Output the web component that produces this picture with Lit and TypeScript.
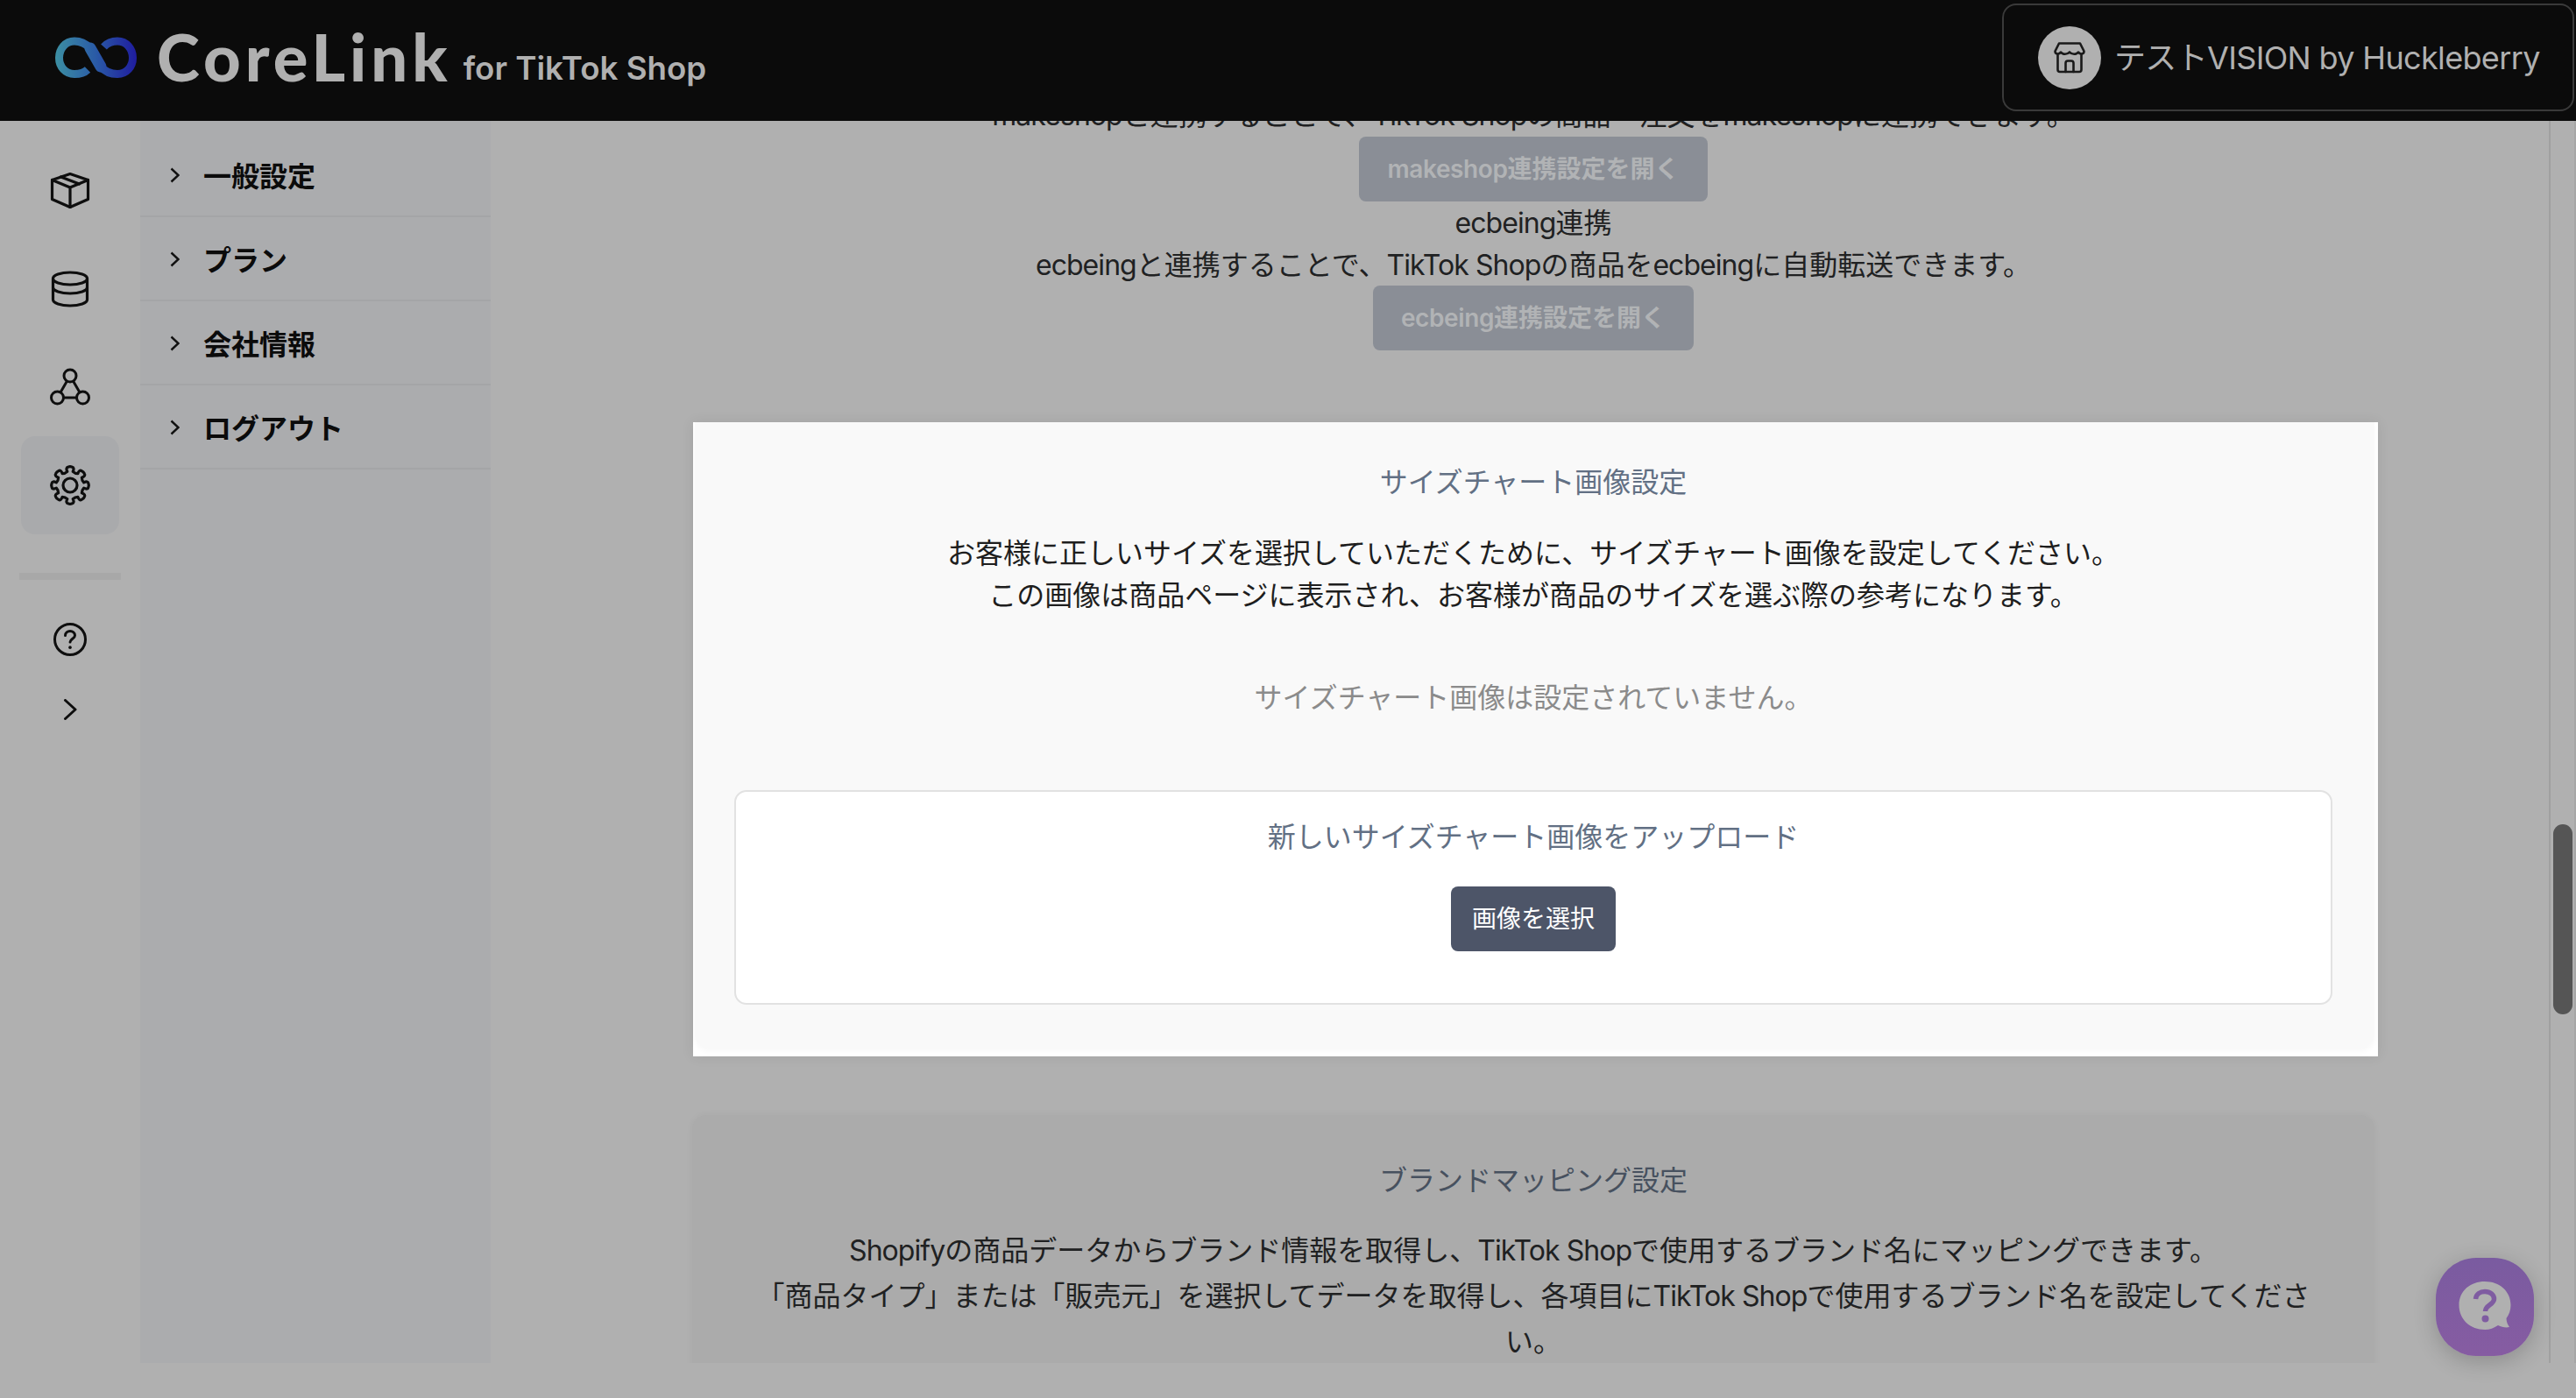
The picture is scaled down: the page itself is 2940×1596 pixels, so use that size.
import { LitElement, html, css, svg } from "lit";
import { customElement } from "lit/decorators.js";

function gearPath(cx: number, cy: number, ro: number, ri: number): string {
  const n = 8;
  const p = (r: number, a: number) => `${(cx + r * Math.cos(a)).toFixed(2)} ${(cy + r * Math.sin(a)).toFixed(2)}`;
  let d = "";
  for (let i = 0; i < n; i++) {
    const a = (i * 2 * Math.PI) / n - Math.PI / 2;
    const next = a + (2 * Math.PI) / n;
    d += i === 0 ? `M${p(ri, a - 0.2)}` : `L${p(ri, a - 0.2)}`;
    d += `Q${p(ro, a - 0.26)} ${p(ro, a - 0.1)}Q${p(ro + 0.8, a)} ${p(ro, a + 0.1)}Q${p(ro, a + 0.26)} ${p(ri, a + 0.2)}`;
    d += `Q${p(ri - 1.5, (a + next) / 2)} ${p(ri, next - 0.2)}`;
  }
  return d + "Z";
}

@customElement("app-root")
export class AppRoot extends LitElement {
  static styles = css`
    :host { display: block; width: 2940px; height: 1596px; background: #b0b0b0; overflow: hidden; position: relative;
      font-family: Inter, "Noto Sans CJK JP", "Liberation Sans", sans-serif; color: #202122; }
    .header { height: 138px; background: #0b0b0b; display: flex; justify-content: space-between; align-items: flex-start; position: relative; z-index: 2; }
    .brand { display: flex; align-items: flex-start; padding-left: 63px; height: 138px; }
    .logo { width: 94px; height: 48px; margin-top: 42px; flex: none; }
    .wordmark { font-family: Lato, Inter, sans-serif; font-weight: 900; font-size: 74px; line-height: 74px; letter-spacing: 5px; color: #b0b0b0; margin: 28px 0 0 22px; }
    .sub { font-family: Inter, sans-serif; font-weight: 600; font-size: 36.7px; line-height: 44px; color: #b0b0b0; margin: 56px 0 0 13px; white-space: nowrap; }
    .account { box-sizing: border-box; width: 653px; height: 123px; margin: 4px 2px 0 0; border: 2px solid #3a3a3a; border-radius: 16px; display: flex; align-items: center; padding-left: 39px; gap: 15px; }
    .avatar { width: 72px; height: 72px; border-radius: 50%; background: #b0b0b0; display: flex; align-items: center; justify-content: center; flex: none; }
    .avatar svg { width: 36px; height: 36px; }
    .account-name { font-size: 36px; line-height: 44px; color: #b0b0b0; white-space: nowrap; letter-spacing: -0.65px; }

    .body { display: flex; height: 1418px; }
    .rail { width: 160px; flex: none; display: flex; flex-direction: column; align-items: center; padding-top: 24px; box-sizing: border-box; }
    .rail-item { width: 112px; height: 112px; display: flex; align-items: center; justify-content: center; border-radius: 16px; flex: none; }
    .rail-item.active { background: #a9aaac; }
    .rail-item svg { width: 48px; height: 48px; }
    .rail-divider { width: 116px; height: 8px; background: #a8a8a8; margin: 44px 0 32px; flex: none; }
    .rail-help { height: 72px; display: flex; align-items: center; }
    .rail-help svg { width: 40px; height: 40px; }
    .rail-expand { margin-top: 32px; display: flex; }
    .rail-expand svg { width: 16px; height: 24px; }

    .subnav { width: 400px; flex: none; background: #abacae; padding-top: 14px; box-sizing: border-box; }
    .nav-row { height: 96px; box-sizing: border-box; border-bottom: 2.5px solid #a4a5a7; display: flex; align-items: center; padding-left: 34px; gap: 27px; font-size: 32px; font-weight: 700; color: #0b0b0b; }
    .nav-row svg { width: 11px; height: 18px; flex: none; margin-top: 2px; }

    .main { flex: 1; min-width: 0; height: 1418px; overflow: hidden; display: flex; flex-direction: column; align-items: center; text-align: center; font-size: 32px; line-height: 48px; }
    .scrolled { margin-top: -30px; display: flex; flex-direction: column; align-items: center; }
    .line { white-space: nowrap; }
    .line-gap { margin-top: 1px; margin-bottom: -1px; }
    .l { letter-spacing: -0.95px; }
    .dim-btn { height: 74px; box-sizing: border-box; padding: 0 32px; border-radius: 8px; background: #8a8e96; color: #b1b3b5; font-size: 28px; font-weight: 600; display: flex; align-items: center; white-space: pre; }
    .dim-btn .l { letter-spacing: -0.4px; }

    .spot { box-sizing: border-box; width: 1923px; height: 724px; margin: 82px 0 0 5px; background: #fff; padding: 0 4px 10px 2px; box-shadow: 0 0 14px rgba(0,0,0,.08); flex: none; }
    .spot-card { height: 100%; box-sizing: border-box; background: #f9f9f9; border-radius: 0 0 16px 16px; padding: 45px 48px 0 45px; box-shadow: 0 4px 6px rgba(0,0,0,.03); }
    .title { color: #627084; }
    .para { color: #1e1e1e; margin-top: 33px; white-space: nowrap; }
    .empty { color: #8b8b8b; margin-top: 69px; }
    .upload { box-sizing: border-box; height: 245px; margin-top: 81px; background: #fff; border: 2px solid #e2e2e2; border-radius: 14px; padding-top: 28px; display: flex; flex-direction: column; align-items: center; }
    .pick { height: 74px; box-sizing: border-box; margin-top: 32px; padding: 0 24px; background: #4d5568; color: #fff; font-size: 28px; border-radius: 8px; display: flex; align-items: center; white-space: nowrap; }

    .brand-card { box-sizing: border-box; width: 1920px; margin-top: 67px; background: #ababab; border-radius: 16px; padding: 51px 0 40px; box-shadow: 0 0 8px rgba(0,0,0,.04); flex: none; }
    .brand-title { color: #47515f; }
    .brand-para { margin-top: 30px; line-height: 52px; color: #202122; white-space: nowrap; }

    .scrollbar { position: absolute; top: 138px; right: 0; width: 31px; height: 1418px; box-sizing: border-box; border-left: 2px solid #a0a0a0; border-right: 2px solid #a6a6a6; }
    .thumb { position: absolute; left: 3px; top: 803px; width: 22px; height: 217px; border-radius: 11px; background: #555; }
    .fab { position: absolute; left: 2780px; top: 1436px; width: 112px; height: 112px; border-radius: 46px; background: linear-gradient(#7a5ba0, #865ca2); box-shadow: 0 6px 26px rgba(0,0,0,.2); display: flex; align-items: center; justify-content: center; }
    .fab svg { width: 62px; height: 62px; }
  `;

  render() {
    const chev = html`<svg viewBox="0 0 11 18" fill="none" stroke="#111" stroke-width="2.4"><path d="M1.5 1.5 9.5 9l-8 7.5"/></svg>`;
    const rows = ["一般設定", "プラン", "会社情報", "ログアウト"];
    return html`
      <div class="header">
        <div class="brand">
          <svg class="logo" viewBox="63 42 94 48" fill="none">
            <defs>
              <linearGradient id="lg" gradientUnits="userSpaceOnUse" x1="63" y1="66" x2="156" y2="66">
                <stop offset="0" stop-color="#3c8fa3"/><stop offset=".5" stop-color="#2a5aa6"/><stop offset="1" stop-color="#1f1c9e"/>
              </linearGradient>
            </defs>
            <path d="M100 79.5C96 83.5 90.500 84.500 85 84.500 74.500 84.500 67.500 76 67.500 66S74.500 47 85 47C93 47 98 50 103 55L115 76C120 82 126 84.500 134 84.500 144.500 84.500 151.500 76 151.500 66S144.500 47 134 47C128.500 47 123 48.500 118.500 53.500" stroke="url(#lg)" stroke-width="9"/>
            <path d="M103 55 115 76" stroke="url(#lg)" stroke-width="13" stroke-linecap="round"/>
          </svg>
          <div class="wordmark">CoreLink</div>
          <div class="sub">for TikTok Shop</div>
        </div>
        <div class="account">
          <div class="avatar">
            <svg viewBox="0 0 36 36" fill="none" stroke="#1a1a1a" stroke-width="2.6" stroke-linejoin="round" stroke-linecap="round">
              <path d="M6 1.500H30L34.500 10.500C34.500 14 30 14.500 28 11.500 26 14.500 20.500 14.500 18 11.500 15.500 14.500 10 14.500 8 11.500 6 14.500 1.500 14 1.500 10.500Z"/>
              <path d="M4.500 14V31.500C4.500 33 5.500 34 7 34H29C30.500 34 31.500 33 31.500 31.500V14"/>
              <path d="M13.500 34V24C13.500 22.500 14.500 21.500 16 21.500H20C21.500 21.500 22.500 22.500 22.500 24V34"/>
            </svg>
          </div>
          <div class="account-name">テストVISION by Huckleberry</div>
        </div>
      </div>

      <div class="body">
        <div class="rail">
          <div class="rail-item">
            <svg viewBox="0 0 48 48" fill="none" stroke="#0e0e0e" stroke-width="3.200" stroke-linejoin="round" stroke-linecap="round">
              <path d="M24 4.500 44.500 11.500V33.500L24 42.500 3.500 33.500V11.500Z"/>
              <path d="M3.500 11.500 24 20 44.500 11.500M24 20V42.500"/>
              <path d="M13.500 8 34.500 16"/>
            </svg>
          </div>
          <div class="rail-item">
            <svg viewBox="0 0 48 48" fill="none" stroke="#0e0e0e" stroke-width="3.200" stroke-linecap="round">
              <ellipse cx="24" cy="12" rx="19.500" ry="7"/>
              <path d="M4.500 12V36C4.500 39.900 13.200 43 24 43S43.500 39.900 43.500 36V12"/>
              <path d="M4.500 22C4.500 25.900 13.200 29 24 29S43.500 25.900 43.500 22"/>
            </svg>
          </div>
          <div class="rail-item">
            <svg viewBox="0 0 48 48" fill="none" stroke="#0e0e0e" stroke-width="3">
              <circle cx="24" cy="11" r="7"/><circle cx="9.500" cy="36" r="7"/><circle cx="38.500" cy="36" r="7"/>
              <path d="M20.500 17 13 30M27.500 17 35 30M16.500 36H31.500"/>
            </svg>
          </div>
          <div class="rail-item active">
            <svg viewBox="0 0 48 48" fill="none" stroke="#0e0e0e" stroke-width="3.200" stroke-linejoin="round">
              ${svg`<path d=${gearPath(24, 24, 21, 16)}/>`}
              <circle cx="24" cy="24" r="8"/>
            </svg>
          </div>
          <div class="rail-divider"></div>
          <div class="rail-help">
            <svg viewBox="0 0 40 40" fill="none" stroke="#0e0e0e" stroke-width="3" stroke-linecap="round">
              <circle cx="20" cy="20" r="17.500"/>
              <path d="M14.500 15.500C14.500 12.500 17 10.500 20 10.500S25.500 12.500 25.500 15.500C25.500 19 20 19.500 20 23"/>
              <path d="M20 29v.2" stroke-width="3.600"/>
            </svg>
          </div>
          <div class="rail-expand">
            <svg viewBox="0 0 16 24" fill="none" stroke="#0e0e0e" stroke-width="3" stroke-linecap="round" stroke-linejoin="round"><path d="M2.500 1.500 14 12 2.500 22.500"/></svg>
          </div>
        </div>

        <div class="subnav">
          ${rows.map((r) => html`<div class="nav-row">${chev}<span>${r}</span></div>`)}
        </div>

        <div class="main">
          <div class="scrolled">
            <div class="line"><span class="l">makeshop</span>と連携することで、<span class="l">TikTok Shop</span>の商品・注文を<span class="l">makeshop</span>に連携できます。</div>
            <div class="dim-btn"><span class="l">makeshop</span>連携設定を開く</div>
            <div class="line line-gap"><span class="l">ecbeing</span>連携</div>
            <div class="line line-gap"><span class="l">ecbeing</span>と連携することで、<span class="l">TikTok Shop</span>の商品を<span class="l">ecbeing</span>に自動転送できます。</div>
            <div class="dim-btn"><span class="l">ecbeing</span>連携設定を開く</div>

            <div class="spot">
              <div class="spot-card">
                <div class="title">サイズチャート画像設定</div>
                <div class="para">お客様に正しいサイズを選択していただくために、サイズチャート画像を設定してください。<br />この画像は商品ページに表示され、お客様が商品のサイズを選ぶ際の参考になります。</div>
                <div class="empty">サイズチャート画像は設定されていません。</div>
                <div class="upload">
                  <div class="title">新しいサイズチャート画像をアップロード</div>
                  <div class="pick">画像を選択</div>
                </div>
              </div>
            </div>

            <div class="brand-card">
              <div class="brand-title">ブランドマッピング設定</div>
              <div class="brand-para"><span class="l">Shopify</span>の商品データからブランド情報を取得し、<span class="l">TikTok Shop</span>で使用するブランド名にマッピングできます。<br />「商品タイプ」または「販売元」を選択してデータを取得し、各項目に<span class="l">TikTok Shop</span>で使用するブランド名を設定してくださ<br />い。</div>
            </div>
          </div>
        </div>
      </div>

      <div class="scrollbar"><div class="thumb"></div></div>
      <div class="fab">
        <svg viewBox="0 0 62 62" fill="none">
          <path d="M31 2C47.500 2 60.500 13 60.500 29 60.500 35 58.500 40 55.500 44 55.500 48 57 51 59 54 55 55 50 54 46 52 41.500 55 36.500 57 31 57 14.500 57 1.500 45.500 1.500 29S14.500 2 31 2Z" fill="#b0b0b0"/>
          <path d="M20.500 22C21 16.500 25.500 13.500 31 13.500 37 13.500 41.500 17 41.500 22 41.500 28.500 31.500 28.500 31.500 36" stroke="#7f5ca1" stroke-width="5.500"/>
          <circle cx="31.500" cy="44.500" r="4" fill="#7f5ca1"/>
        </svg>
      </div>
    `;
  }
}
